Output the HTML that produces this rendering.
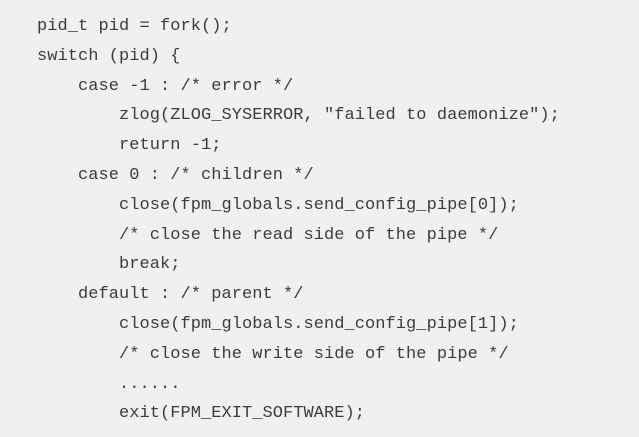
<!DOCTYPE html>
<html><head><style>
html,body{margin:0;padding:0;background:#f0f0f0;width:639px;height:437px;overflow:hidden}
pre{margin:0;position:absolute;left:37px;top:12px;font-family:"Liberation Mono","Noto Sans CJK SC",monospace;font-size:17px;line-height:29.8px;color:#3c3c3c;letter-spacing:0.05px}
</style></head><body>
<pre>pid_t pid = fork();
switch (pid) {
    case -1 : /* error */
        zlog(ZLOG_SYSERROR, "failed to daemonize");
        return -1;
    case 0 : /* children */
        close(fpm_globals.send_config_pipe[0]);
        /* close the read side of the pipe */
        break;
    default : /* parent */
        close(fpm_globals.send_config_pipe[1]);
        /* close the write side of the pipe */
        ......
        exit(FPM_EXIT_SOFTWARE);</pre>
</body></html>
